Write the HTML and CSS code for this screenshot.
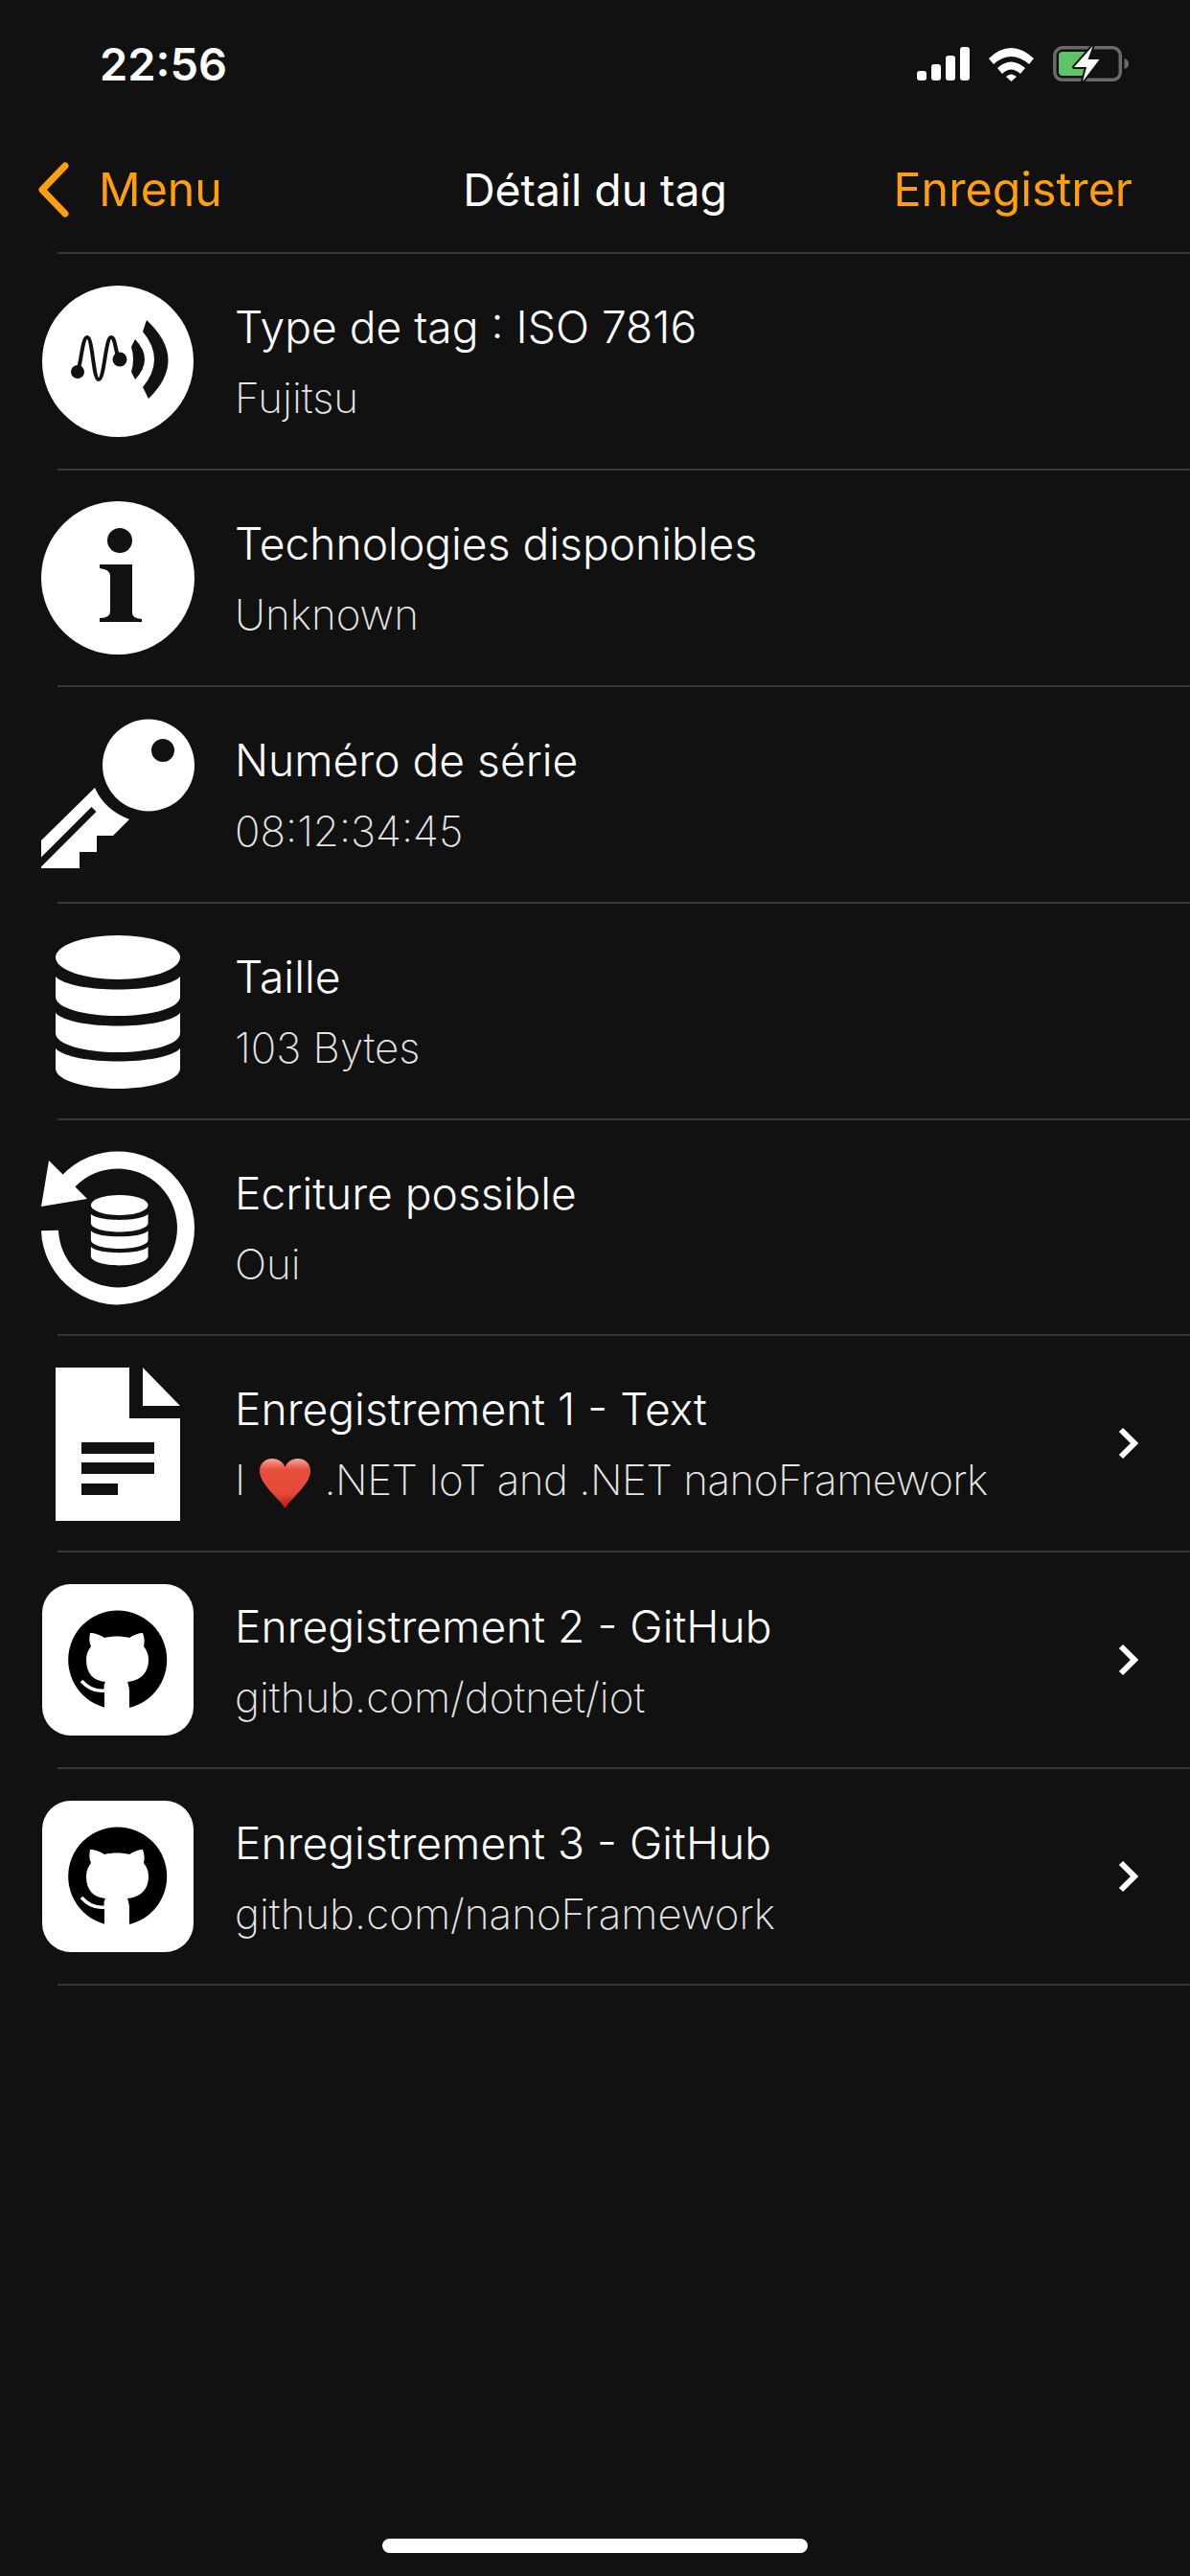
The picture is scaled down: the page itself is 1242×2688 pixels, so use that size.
FILE: index.html
```html
<!DOCTYPE html>
<html lang="fr">

<head>
    <meta charset="UTF-8">
    <meta name="viewport" content="width=device-width, initial-scale=1.0">
    <title>Détail du tag</title>
    <link rel="stylesheet" href="styles.css">
</head>

<body>
    <div class="status">
        <span class="time">22:56</span>
        <svg class="status-icons" width="221" height="37" viewBox="0 0 221 37">
            <!-- signal -->
            <rect x="0" y="26" width="10" height="10" rx="3" fill="#fff" />
            <rect x="15" y="19" width="10" height="17" rx="3" fill="#fff" />
            <rect x="30" y="10" width="10" height="26" rx="3" fill="#fff" />
            <rect x="45" y="1" width="10" height="35" rx="3" fill="#fff" />
            <!-- wifi -->
            <path d="M75 13 Q98 -9 122 13 L117 19 Q98 3 80 19 Z" fill="#fff" />
            <path d="M84 23 Q98 10 113 23 L108 29 Q98 20 89 29 Z" fill="#fff" />
            <path d="M93 32 Q98 27 104 32 L98.500 37 Z" fill="#fff" />
            <!-- battery -->
            <rect x="143.800" y="1.800" width="68.500" height="33.500" rx="8" fill="none" stroke="#6a6a6a" stroke-width="3.500" />
            <path d="M216.500 13 Q221 14 221 18.500 Q221 23 216.500 24 Z" fill="#6a6a6a" />
            <rect x="148" y="6" width="32" height="25" rx="4" fill="#5fc466" />
            <path d="M183.500 0 L164 22 H177 L173 37 L190.500 14 H178.500 Z" fill="#fff" stroke="#111" stroke-width="4" paint-order="stroke" stroke-linejoin="round" />
        </svg>
    </div>

    <div class="nav">
        <div class="back">
            <svg width="32" height="58" viewBox="0 0 32 58">
                <path d="M28 4 L4 29 L28 54" fill="none" stroke="#ff9f0a" stroke-width="7" stroke-linecap="round" stroke-linejoin="round" />
            </svg>
            <span>Menu</span>
        </div>
        <div class="nav-title">Détail du tag</div>
        <div class="save">Enregistrer</div>
    </div>

    <ul class="list">
        <li class="row">
            <svg class="ico" viewBox="0 0 160 160">
                <ellipse cx="80" cy="80" rx="79" ry="79" fill="#fff" />
                <path d="M38 91 C42 80 43 55 48 55 C54 55 54 99 60 99 C66 99 67 55 73 55 C78 55 77 72 82 78" fill="none" stroke="#111" stroke-width="4" />
                <circle cx="38" cy="91" r="7" fill="#111" />
                <circle cx="82" cy="78" r="7.500" fill="#111" />
                <path d="M98 57 Q118 78 98 99 L94 91 Q98 78 94 65 Z" fill="#111" />
                <path d="M110 37 Q154 78 112 119 L106 107 Q130 78 106 49 Z" fill="#111" />
            </svg>
            <div class="txt">
                <div class="name">Type de tag : ISO 7816</div>
                <div class="val">Fujitsu</div>
            </div>
        </li>
        <li class="row">
            <svg class="ico" viewBox="0 0 160 160">
                <circle cx="80" cy="80" r="80" fill="#fff" />
                <circle cx="82" cy="41" r="13" fill="#111" />
                <path d="M61 66 H95 V117 Q95 122 105 123 V126 H61 V122 Q72 122 72 115 V78 Q72 71 61 70 Z" fill="#111" />
            </svg>
            <div class="txt">
                <div class="name">Technologies disponibles</div>
                <div class="val">Unknown</div>
            </div>
        </li>
        <li class="row">
            <svg class="ico" viewBox="0 0 160 160">
                <path d="M112 1.500 A48 48 0 1 1 112 97.500 A48 48 0 1 1 112 1.500 Z M127 22 A12 12 0 1 0 127 46 A12 12 0 1 0 127 22 Z" fill="#fff" fill-rule="evenodd" />
                <path d="M56 73 Q66 96 92 106 L75 123 H58 V140 H40 V157 H0 V128 Z" fill="#fff" />
                <path d="M-4 154.500 L55 95.500" stroke="#111" stroke-width="7" />
            </svg>
            <div class="txt">
                <div class="name">Numéro de série</div>
                <div class="val">08:12:34:45</div>
            </div>
        </li>
        <li class="row">
            <svg class="ico" viewBox="0 0 160 160">
                <ellipse cx="80" cy="24" rx="65" ry="23" fill="#fff" />
                <path d="M15 44 C32 62 128 62 145 44 V65 C145 77 115 85 80 85 C45 85 15 77 15 65 Z" fill="#fff" />
                <path d="M15 82 C32 100 128 100 145 82 V103 C145 115 115 123 80 123 C45 123 15 115 15 103 Z" fill="#fff" />
                <path d="M15 119 C32 137 128 137 145 119 V140 C145 152 115 161 80 161 C45 161 15 152 15 140 Z" fill="#fff" />
            </svg>
            <div class="txt">
                <div class="name">Taille</div>
                <div class="val">103 Bytes</div>
            </div>
        </li>
        <li class="row">
            <svg class="ico" viewBox="0 0 160 160">
                <path d="M9 84 A71 71 0 1 0 28 33" fill="none" stroke="#fff" stroke-width="18" />
                <path d="M0 59 L8 11 L48 51 Z" fill="#fff" />
                <g transform="translate(45 46.500) scale(.459)">
                    <ellipse cx="80" cy="24" rx="65" ry="23" fill="#fff" />
                    <path d="M15 44 C32 62 128 62 145 44 V65 C145 77 115 85 80 85 C45 85 15 77 15 65 Z" fill="#fff" />
                    <path d="M15 82 C32 100 128 100 145 82 V103 C145 115 115 123 80 123 C45 123 15 115 15 103 Z" fill="#fff" />
                    <path d="M15 119 C32 137 128 137 145 119 V140 C145 152 115 161 80 161 C45 161 15 152 15 140 Z" fill="#fff" />
                </g>
            </svg>
            <div class="txt">
                <div class="name">Ecriture possible</div>
                <div class="val">Oui</div>
            </div>
        </li>
        <li class="row">
            <svg class="ico" viewBox="0 0 160 160">
                <path d="M15 1 H92 V54 H145 V161 H15 Z" fill="#fff" />
                <path d="M106 1 L145 41 H106 Z" fill="#fff" />
                <rect x="42" y="79" width="76" height="12" fill="#111" />
                <rect x="42" y="100" width="76" height="12" fill="#111" />
                <rect x="42" y="122" width="38" height="12" fill="#111" />
            </svg>
            <div class="txt">
                <div class="name">Enregistrement 1 - Text</div>
                <div class="val val-long">I <svg class="heart" width="53" height="52" viewBox="0 0 53 52" role="img" aria-label="cœur">
                        <defs>
                            <linearGradient id="heartFill" x1="0" y1="0" x2="0" y2="1">
                                <stop offset="0" stop-color="#f4a79b" />
                                <stop offset=".22" stop-color="#e94f3d" />
                                <stop offset=".7" stop-color="#e54a38" />
                                <stop offset="1" stop-color="#b3170f" />
                            </linearGradient>
                        </defs>
                        <path d="M26.500 52 C20 41 0 27 0 13 C0 5 6 0 13 0 C19 0 24 3 26.500 9 C29 3 34 0 40 0 C47 0 53 5 53 13 C53 27 33 41 26.500 52 Z" fill="url(#heartFill)" />
                    </svg> .NET IoT and .NET nanoFramework</div>
            </div>
            <svg class="arrow" width="22" height="34" viewBox="0 0 22 34">
                <path d="M3 3 L17 17 L3 31" fill="none" stroke="#fff" stroke-width="6" />
            </svg>
        </li>
        <li class="row">
            <svg class="ico" viewBox="0 0 160 160">
                <rect x="1" y="1" width="158" height="158" rx="30" fill="#fff" />
                <circle cx="79.700" cy="80" r="51.500" fill="#000" />
                <path d="M51 52 C56 52 62 54 66 57 C74 55 84 55 92 57 C96 54 102 52 106 52 C108 58 108 62 107 66 C110 70 112 74 112 80 C112 95 102 102 90 103 C91 106 92 109 92 113 V135 H66 V113 C65 106 66 105 67 103 C55 102 47 95 47 80 C47 74 49 70 52 66 C50 62 50 58 51 52 Z" fill="#fff" />
                <path d="M42 102 Q53 114 66 112" fill="none" stroke="#fff" stroke-width="3.500" />
            </svg>
            <div class="txt">
                <div class="name">Enregistrement 2 - GitHub</div>
                <div class="val">github.com/dotnet/iot</div>
            </div>
            <svg class="arrow" width="22" height="34" viewBox="0 0 22 34">
                <path d="M3 3 L17 17 L3 31" fill="none" stroke="#fff" stroke-width="6" />
            </svg>
        </li>
        <li class="row">
            <svg class="ico" viewBox="0 0 160 160">
                <rect x="1" y="1" width="158" height="158" rx="30" fill="#fff" />
                <circle cx="79.700" cy="80" r="51.500" fill="#000" />
                <path d="M51 52 C56 52 62 54 66 57 C74 55 84 55 92 57 C96 54 102 52 106 52 C108 58 108 62 107 66 C110 70 112 74 112 80 C112 95 102 102 90 103 C91 106 92 109 92 113 V135 H66 V113 C65 106 66 105 67 103 C55 102 47 95 47 80 C47 74 49 70 52 66 C50 62 50 58 51 52 Z" fill="#fff" />
                <path d="M42 102 Q53 114 66 112" fill="none" stroke="#fff" stroke-width="3.500" />
            </svg>
            <div class="txt">
                <div class="name">Enregistrement 3 - GitHub</div>
                <div class="val">github.com/nanoFramework</div>
            </div>
            <svg class="arrow" width="22" height="34" viewBox="0 0 22 34">
                <path d="M3 3 L17 17 L3 31" fill="none" stroke="#fff" stroke-width="6" />
            </svg>
        </li>
    </ul>

    <div class="home"></div>
</body>

</html>
```

FILE: styles.css
```css
* {
    padding: 0;
    margin: 0;
    list-style: none;
    box-sizing: border-box;
}

body {
    width: 1242px;
    height: 2688px;
    overflow: hidden;
    display: flex;
    flex-direction: column;
    background-color: #111;
    color: #fff;
    font-family: Inter, "Liberation Sans", sans-serif;
}

.status {
    height: 132px;
    padding: 0 64px 0 104px;
    display: flex;
    justify-content: space-between;
    align-items: center;
}

.time {
    font-size: 47px;
    font-weight: 600;
}

.nav {
    height: 131px;
    padding: 0 40px;
    display: grid;
    grid-template-columns: 1fr auto 1fr;
    align-items: center;
    font-size: 48.300px;
}

.back {
    display: flex;
    align-items: center;
    gap: 31px;
    color: #ff9f0a;
}

.nav-title {
    font-size: 46.300px;
    text-align: center;
}

.save {
    padding-right: 20px;
    text-align: right;
    color: #ff9f0a;
}

.list {
    margin-left: 60px;
    border-top: 2px solid #363636;
}

.row {
    height: 225.875px;
    display: flex;
    align-items: center;
    border-bottom: 2px solid #363636;
}

.ico {
    width: 160px;
    height: 160px;
    margin-left: -17px;
    flex-shrink: 0;
    overflow: visible;
}

.txt {
    margin-left: 42px;
    padding-top: 3px;
    flex: 1;
}

.name {
    font-size: 46.200px;
    font-weight: 300;
    line-height: 56px;
}

.val {
    margin-top: 18px;
    font-size: 43.900px;
    font-weight: 200;
    line-height: 56px;
    color: #e6e6e6;
    white-space: nowrap;
}

.val-long {
    letter-spacing: -0.5px;
}

.heart {
    vertical-align: -14px;
    margin: 0 3px;
}

.arrow {
    margin-right: 53px;
    flex-shrink: 0;
}

.home {
    width: 444px;
    height: 15px;
    margin: auto auto 24px;
    border-radius: 8px;
    background-color: #fff;
}
```
